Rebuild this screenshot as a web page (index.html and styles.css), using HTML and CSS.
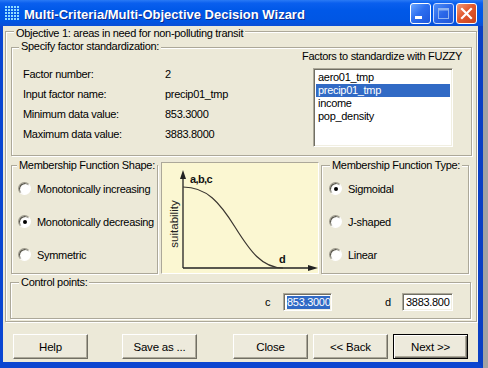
FILE: index.html
```html
<!DOCTYPE html>
<html>
<head>
<meta charset="utf-8">
<link rel="stylesheet" href="styles.css">
</head>
<body>
<div class="win">
  <div class="titlebar">
    <svg class="appicon" width="16" height="16" viewBox="0 0 16 16">
      <g fill="#8fdcff">
        <rect x="1" y="1" width="2" height="2"/><rect x="4" y="1" width="2" height="2"/><rect x="7" y="1" width="2" height="2"/><rect x="10" y="1" width="2" height="2"/><rect x="13" y="1" width="2" height="2"/>
        <rect x="1" y="4" width="2" height="2"/><rect x="4" y="4" width="2" height="2"/><rect x="7" y="4" width="2" height="2"/><rect x="10" y="4" width="2" height="2"/><rect x="13" y="4" width="2" height="2"/>
        <rect x="1" y="7" width="2" height="2"/><rect x="4" y="7" width="2" height="2"/><rect x="7" y="7" width="2" height="2"/><rect x="10" y="7" width="2" height="2"/><rect x="13" y="7" width="2" height="2"/>
        <rect x="1" y="10" width="2" height="2"/><rect x="4" y="10" width="2" height="2"/><rect x="7" y="10" width="2" height="2"/><rect x="10" y="10" width="2" height="2"/><rect x="13" y="10" width="2" height="2"/>
        <rect x="1" y="13" width="2" height="2"/><rect x="4" y="13" width="2" height="2"/><rect x="7" y="13" width="2" height="2"/><rect x="10" y="13" width="2" height="2"/><rect x="13" y="13" width="2" height="2"/>
      </g>
    </svg>
    <span class="title">Multi-Criteria/Multi-Objective Decision Wizard</span>
    <div class="tbtns">
      <span class="tbtn"><svg width="19" height="19" viewBox="0 0 19 19"><rect x="4" y="12" width="7" height="3" fill="#fff"/></svg></span>
      <span class="tbtn dis"><svg width="19" height="19" viewBox="0 0 19 19"><rect x="4.5" y="4.5" width="10" height="10" fill="none" stroke="#8fb3f0" stroke-width="1"/><rect x="4" y="4" width="11" height="2.5" fill="#8fb3f0"/></svg></span>
      <span class="tbtn close"><svg width="19" height="19" viewBox="0 0 19 19"><path d="M5 5 L14 14 M14 5 L5 14" stroke="#fff" stroke-width="2.2" stroke-linecap="square"/></svg></span>
    </div>
  </div>
  <div class="client">
    <div class="group objective">
      <div class="cap">Objective 1: areas in need for non-polluting transit</div>
      <div class="group specify">
        <div class="spec-left">
          <div class="cap cap-spec">Specify factor standardization:</div>
          <div class="info">
            <span>Factor number:</span><span>2</span>
            <span>Input factor name:</span><span>precip01_tmp</span>
            <span>Minimum data value:</span><span>853.3000</span>
            <span>Maximum data value:</span><span>3883.8000</span>
          </div>
        </div>
        <div class="spec-right">
          <div class="fuzzy-label">Factors to standardize with FUZZY</div>
          <div class="listbox">
            <div class="item">aero01_tmp</div>
            <div class="item sel">precip01_tmp</div>
            <div class="item">income</div>
            <div class="item">pop_density</div>
          </div>
        </div>
      </div>
      <div class="midrow">
        <div class="group shape">
          <div class="cap">Membership Function Shape:</div>
          <div class="opt"><span class="radio"></span><span>Monotonically increasing</span></div>
          <div class="opt"><span class="radio on"></span><span>Monotonically decreasing</span></div>
          <div class="opt"><span class="radio"></span><span>Symmetric</span></div>
        </div>
        <div class="chart">
          <svg width="156" height="110" viewBox="0 0 156 110">
            <line x1="21" y1="14" x2="21" y2="105" stroke="#222" stroke-width="1.3"/>
            <polygon points="21,7 18,16 24,16" fill="#222"/>
            <line x1="21" y1="105" x2="148" y2="105" stroke="#222" stroke-width="1.3"/>
            <polygon points="156,105 146,102 146,108" fill="#222"/>
            <path d="M21,24 C45,24 58,40 73,64 S100,105 121,105" fill="none" stroke="#3a3530" stroke-width="1.2"/>
            <text x="28" y="20" class="ch-bold">a,b,c</text>
            <text x="117" y="100" class="ch-bold">d</text>
            <text transform="translate(16,61) rotate(-90)" text-anchor="middle" class="ch-lbl">suitability</text>
          </svg>
        </div>
        <div class="group type">
          <div class="cap">Membership Function Type:</div>
          <div class="opt"><span class="radio on"></span><span>Sigmoidal</span></div>
          <div class="opt"><span class="radio"></span><span>J-shaped</span></div>
          <div class="opt"><span class="radio"></span><span>Linear</span></div>
        </div>
      </div>
      <div class="group control">
        <div class="cap">Control points:</div>
        <div class="cp-row">
          <span class="lbl-c">c</span>
          <span class="field fc"><span class="selected">853.3000</span><span class="caret"></span></span>
          <span class="lbl-d">d</span>
          <span class="field fd">3883.800</span>
        </div>
      </div>
    </div>
    <div class="btnrow">
      <button class="btn">Help</button>
      <button class="btn b2">Save as ...</button>
      <button class="btn b3">Close</button>
      <button class="btn b4">&lt;&lt; Back</button>
      <button class="btn b5 next">Next &gt;&gt;</button>
    </div>
  </div>
</div>
</body>
</html>
```

FILE: styles.css
```css
* { box-sizing: border-box; }

body {
  margin: 0;
  width: 488px;
  height: 368px;
  overflow: hidden;
  background: #a3a3a3;
  font-family: "Liberation Sans", Arial, sans-serif;
  font-size: 11px;
  letter-spacing: -0.3px;
  color: #000;
}

.win {
  width: 483px;
  height: 368px;
  display: flex;
  flex-direction: column;
}

.titlebar {
  height: 26px;
  flex: none;
  display: flex;
  align-items: center;
  padding: 0 6px 0 4px;
  background: linear-gradient(to bottom, #2a7af5 0%, #0a5fee 12%, #0058e8 40%, #0056e4 80%, #0a4fd6 100%);
}

.appicon { flex: none; }

.title {
  margin-left: 4px;
  padding-top: 2px;
  color: #fff;
  font-weight: bold;
  font-size: 13px;
  letter-spacing: 0;
  white-space: nowrap;
  text-shadow: 1px 1px 0 #0c2a8c;
}

.tbtns {
  margin-left: auto;
  display: flex;
  gap: 2px;
}

.tbtn {
  width: 21px;
  height: 21px;
  border: 1px solid #fff;
  border-radius: 3px;
  background: linear-gradient(135deg, #6aa6ff 0%, #2d6ff0 45%, #1c56dc 100%);
  display: flex;
}

.tbtn.dis {
  background: linear-gradient(135deg, #4f8ff8 0%, #2a66e8 50%, #1f56d8 100%);
  border-color: #c9dafc;
}

.tbtn.close {
  background: linear-gradient(135deg, #f09a7a 0%, #e2592f 45%, #c9431d 100%);
}

.client {
  flex: 1;
  background: #ece9d8;
  border-style: solid;
  border-width: 0 5px 6px 3px;
  border-color: #0a46d2 #0a3fc4 #0c45d0 #0a46d2;
  display: flex;
  flex-direction: column;
}

.group {
  border: 1px solid #aca899;
  box-shadow: inset 1px 1px 0 #fff, 1px 1px 0 #fff;
}

.cap {
  width: max-content;
  line-height: 13px;
  padding: 0 2px;
  background: #ece9d8;
  white-space: nowrap;
}

.objective {
  margin: 5px 1px 0 2px;
  height: 291px;
}

.objective > .cap { margin: -5px 0 0 8px; }

.specify {
  margin: 7px 0 0 5px;
  width: 461px;
  height: 109px;
  display: flex;
}

.spec-left { width: 290px; }

.cap-spec { margin: -8px 0 0 7px; }

.info {
  margin-top: 11px;
  padding-left: 11px;
  display: grid;
  grid-template-columns: 142px auto;
  line-height: 20px;
}

.spec-right {
  flex: 1;
  margin-top: 2px;
}

.fuzzy-label {
  line-height: 13px;
  white-space: nowrap;
}

.listbox {
  margin: 5px 0 0 11px;
  width: 140px;
  height: 79px;
  background: #fff;
  border: 1px solid;
  border-color: #aca899 #fff #fff #aca899;
  box-shadow: inset 1px 1px 0 #716f64, inset -1px -1px 0 #f1efe2;
  padding: 2px;
}

.item {
  line-height: 13px;
  padding-left: 2px;
}

.item.sel {
  background: #316ac5;
  color: #fff;
}

.midrow {
  display: flex;
  align-items: flex-start;
  margin-left: 5px;
}

.shape {
  margin-top: 9px;
  width: 147px;
  height: 109px;
}

.shape .cap { margin: -7px 0 0 5px; }

.opt {
  height: 33px;
  display: flex;
  align-items: center;
  white-space: nowrap;
}

.shape .opt { padding-left: 6px; }
.type .opt { padding-left: 7px; }

.radio {
  width: 13px;
  height: 13px;
  flex: none;
  margin-right: 6px;
  border-radius: 50%;
  border: 1px solid;
  border-color: #9d9a8c #fff #fff #9d9a8c;
  background: radial-gradient(circle at 62% 62%, #fff 45%, #e4e2d6 100%);
  box-shadow: inset 1px 1px 0 #55534a;
  display: flex;
  align-items: center;
  justify-content: center;
}

.radio.on::after {
  content: "";
  width: 4px;
  height: 4px;
  border-radius: 50%;
  background: #000;
}

.chart {
  margin: 6px 0 0 3px;
  width: 158px;
  height: 112px;
  background: #fbf7d2;
  border: 1px solid;
  border-color: #aca899 #fff #fff #aca899;
}

.chart svg { display: block; }

.ch-bold {
  font-family: "Liberation Sans", Arial, sans-serif;
  font-weight: bold;
  font-size: 11px;
  letter-spacing: -0.6px;
  fill: #111;
}

.ch-lbl {
  font-family: "Liberation Sans", Arial, sans-serif;
  font-size: 11.5px;
  letter-spacing: 0;
  fill: #222;
}

.type {
  margin: 9px 0 0 2px;
  width: 148px;
  height: 109px;
}

.type .cap { margin: -7px 0 0 8px; }

.control {
  margin: 8px 0 0 4px;
  width: 461px;
  height: 37px;
}

.control .cap { margin: -7px 0 0 8px; }

.cp-row {
  margin-top: 4px;
  display: flex;
  align-items: center;
  height: 18px;
}

.lbl-c { margin-left: 254px; width: 18px; }
.lbl-d { margin-left: 53px; width: 17px; }

.field {
  height: 18px;
  border: 1px solid;
  border-color: #aca899 #fff #fff #aca899;
  box-shadow: inset 1px 1px 0 #716f64, inset -1px -1px 0 #f1efe2;
  background: #fff;
  padding: 0 2px 0 3px;
  display: flex;
  align-items: center;
  white-space: nowrap;
  overflow: hidden;
}

.fc { width: 49px; }
.fd { width: 51px; }

.selected {
  background: #316ac5;
  color: #fff;
  line-height: 13px;
}

.caret {
  width: 1px;
  height: 13px;
  background: #000;
}

.btnrow {
  display: flex;
  margin: 12px 0 0 10px;
}

.btn {
  width: 75px;
  height: 25px;
  padding: 0;
  font-family: inherit;
  font-size: 11.5px;
  letter-spacing: -0.2px;
  color: #000;
  background: #edeadc;
  border: 1px solid;
  border-color: #fff #716f64 #716f64 #fff;
  box-shadow: inset -1px -1px 0 #aca899;
}

.b2 { margin-left: 34px; }
.b3 { margin-left: 36px; }
.b4 { margin-left: 5px; }
.b5 { margin-left: 5px; }

.btn.next {
  border: 1px solid #000;
  box-shadow: inset 1px 1px 0 #fff, inset -1px -1px 0 #716f64, inset -2px -2px 0 #aca899;
}
```
